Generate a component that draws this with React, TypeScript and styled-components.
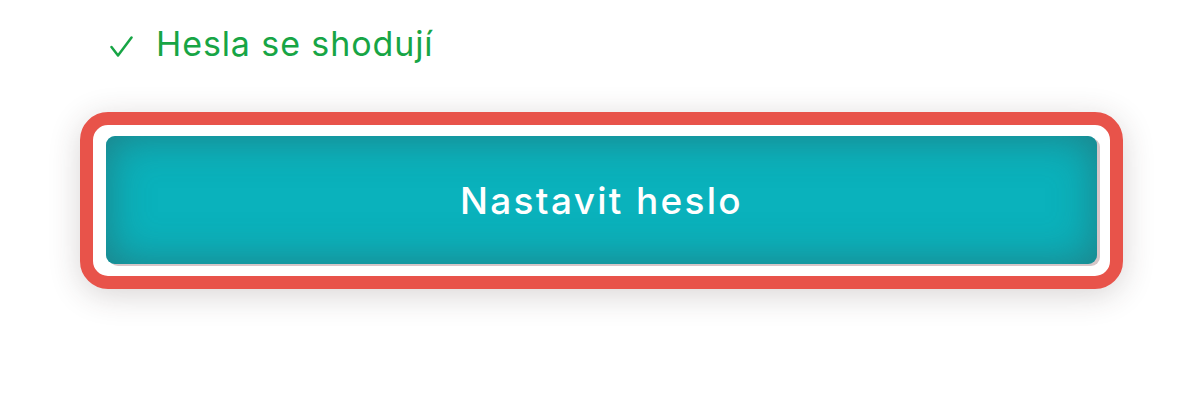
import React from "react";
import styled, { createGlobalStyle } from "styled-components";

const GlobalStyle = createGlobalStyle`
  html, body {
    margin: 0;
    padding: 0;
    background: #ffffff;
  }
  body {
    font-family: Inter, "Noto Sans", "Liberation Sans", sans-serif;
    overflow: hidden;
  }
`;

const Page = styled.div`
  width: 1200px;
  height: 400px;
  box-sizing: border-box;
  padding: 0 77px 0 80px;
  display: flex;
  flex-direction: column;
  overflow: hidden;
`;

const CheckList = styled.ul`
  list-style: none;
  margin: -44px 0 0 0;
  padding: 0 0 0 30px;
  display: flex;
  flex-direction: column;
  gap: 22px;
`;

const CheckItem = styled.li`
  display: flex;
  align-items: center;
  gap: 23px;
  height: 44px;
  font-size: 34px;
  line-height: 44px;
  letter-spacing: 0.9px;
  color: #17a545;
  font-weight: 400;
`;

const CheckIcon = styled.svg`
  flex: 0 0 auto;
  width: 23px;
  height: 21px;
  margin-top: 4px;
`;

const Frame = styled.div`
  margin-top: 46px;
  border: 13px solid #e8534a;
  border-radius: 28px;
  background: #ffffff;
  padding: 11px 13px 12px 13px;
  box-shadow: 0 6px 32px rgba(60, 40, 40, 0.2);
`;

const PrimaryButton = styled.button`
  display: flex;
  align-items: center;
  justify-content: center;
  width: 100%;
  height: 128px;
  border: none;
  border-radius: 9px;
  background: #0ab2bc;
  box-shadow: inset 0 0 44px rgba(38, 112, 118, 0.8), 3px 2px 0 #d6c6c8;
  color: #ffffff;
  font-family: Inter, "Noto Sans", sans-serif;
  font-size: 37px;
  font-weight: 500;
  letter-spacing: 2.3px;
  cursor: pointer;
`;

const Check = () => (
  <CheckIcon viewBox="0 0 23 21" aria-hidden="true">
    <polyline
      points="1.5,11 8,19.5 21.5,1.5"
      fill="none"
      stroke="#17a545"
      strokeWidth="2.5"
      strokeLinecap="round"
      strokeLinejoin="round"
    />
  </CheckIcon>
);

export default function App() {
  return (
    <>
      <GlobalStyle />
      <Page>
        <CheckList>
          <CheckItem>
            <Check />
            <span>Alespoň jedno velké písmeno</span>
          </CheckItem>
          <CheckItem>
            <Check />
            <span>Hesla se shodují</span>
          </CheckItem>
        </CheckList>
        <Frame>
          <PrimaryButton type="button">Nastavit heslo</PrimaryButton>
        </Frame>
      </Page>
    </>
  );
}
